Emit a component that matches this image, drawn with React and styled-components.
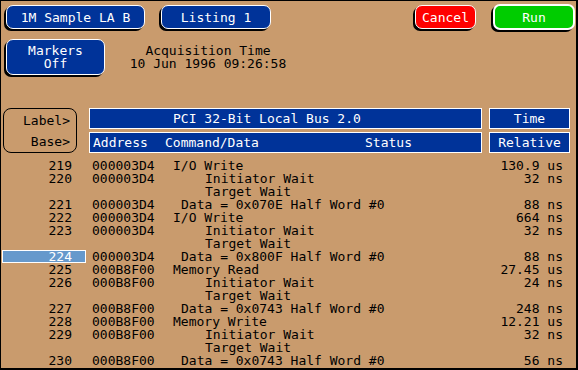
import React from 'react';
import styled, { createGlobalStyle } from 'styled-components';

const Global = createGlobalStyle`
  html, body {
    margin: 0;
    padding: 0;
    background: #c99b6d;
  }
`;

const Screen = styled.div`
  width: 578px;
  height: 370px;
  box-sizing: border-box;
  border-style: solid;
  border-color: #000;
  border-width: 1px 2px 2px 1px;
  background: #c99b6d;
  display: flex;
  flex-direction: column;
  overflow: hidden;
  font-family: 'DejaVu Sans Mono', 'Liberation Mono', monospace;
  font-size: 13px;
  color: #000;
`;

const TopBar = styled.div`
  display: flex;
  align-items: center;
  height: 26px;
  margin-top: 3px;
  padding: 0 1px 0 5px;
`;

const SoftKey = styled.div`
  width: ${({ $w }) => $w}px;
  height: ${({ $h }) => $h || 24}px;
  margin-left: ${({ $ml }) => ($ml === 'auto' ? 'auto' : `${$ml || 0}px`)};
  box-sizing: border-box;
  background: ${({ $bg }) => $bg || '#003399'};
  color: #fff;
  border: ${({ $bw }) => $bw || 1.5}px solid #fff;
  border-radius: 7px;
  box-shadow: -2px 2px 0 #000;
  display: flex;
  flex-direction: column;
  align-items: center;
  justify-content: center;
  line-height: 13px;
  white-space: pre;
`;

const InfoRow = styled.div`
  display: flex;
  margin-top: 9px;
  padding-left: 5px;
`;

const Acquisition = styled.div`
  width: 170px;
  margin-left: 18px;
  padding-top: 5px;
  text-align: center;
  line-height: 13px;
  white-space: pre;
`;

const Header = styled.div`
  display: flex;
  margin-top: 33px;
  padding-left: 2px;
`;

const LabelBox = styled.div`
  width: 74px;
  height: 45px;
  box-sizing: border-box;
  border: 1px solid #000;
  border-radius: 8px;
  display: flex;
  flex-direction: column;
  align-items: flex-end;
  padding: 5px 6px 0 0;
  line-height: 13px;
  gap: 8px;
`;

const Bars = styled.div`
  display: grid;
  grid-template-columns: 393px 81px;
  grid-template-rows: 21px 21px;
  column-gap: 7px;
  row-gap: 3px;
  margin-left: 12px;
`;

const Bar = styled.div`
  box-sizing: border-box;
  background: #003399;
  border: 1px solid #fff;
  color: #fff;
  display: flex;
  align-items: center;
  justify-content: ${({ $center }) => ($center ? 'center' : 'flex-start')};
  padding-left: ${({ $pl }) => $pl || 0}px;
  white-space: pre;
`;

const ColHead = styled.span`
  width: ${({ $w }) => ($w ? `${$w}px` : 'auto')};
  flex: none;
`;

const List = styled.div`
  display: flex;
  flex-direction: column;
  margin-top: 6px;
  padding: 0 13px 0 1px;
`;

const Row = styled.div`
  display: grid;
  grid-template-columns: 90px 81px 1fr 100px;
  height: 13px;
  line-height: 13px;
  white-space: pre;
`;

const State = styled.div`
  width: 84px;
  box-sizing: border-box;
  text-align: right;
  padding-right: 14px;
  background: ${({ $sel }) => ($sel ? '#6699cc' : 'transparent')};
  box-shadow: ${({ $sel }) => ($sel ? 'inset 0 0 0 1px #fff' : 'none')};
  color: ${({ $sel }) => ($sel ? '#fff' : '#000')};
`;

const Command = styled.div`
  padding-left: ${({ $indent }) => $indent || 0}px;
`;

const Time = styled.div`
  text-align: right;
`;

const rows = [
  { n: '219', a: '000003D4', c: 'I/O Write', t: '130.9 us' },
  { n: '220', a: '000003D4', c: 'Initiator Wait', i: 32, t: '32 ns' },
  { c: 'Target Wait', i: 32 },
  { n: '221', a: '000003D4', c: 'Data = 0x070E Half Word #0', i: 8, t: '88 ns' },
  { n: '222', a: '000003D4', c: 'I/O Write', t: '664 ns' },
  { n: '223', a: '000003D4', c: 'Initiator Wait', i: 32, t: '32 ns' },
  { c: 'Target Wait', i: 32 },
  { n: '224', a: '000003D4', c: 'Data = 0x800F Half Word #0', i: 8, t: '88 ns', sel: true },
  { n: '225', a: '000B8F00', c: 'Memory Read', t: '27.45 us' },
  { n: '226', a: '000B8F00', c: 'Initiator Wait', i: 32, t: '24 ns' },
  { c: 'Target Wait', i: 32 },
  { n: '227', a: '000B8F00', c: 'Data = 0x0743 Half Word #0', i: 8, t: '248 ns' },
  { n: '228', a: '000B8F00', c: 'Memory Write', t: '12.21 us' },
  { n: '229', a: '000B8F00', c: 'Initiator Wait', i: 32, t: '32 ns' },
  { c: 'Target Wait', i: 32 },
  { n: '230', a: '000B8F00', c: 'Data = 0x0743 Half Word #0', i: 8, t: '56 ns' },
];

export default function App() {
  return (
    <>
      <Global />
      <Screen>
        <TopBar>
          <SoftKey $w={139}>1M Sample LA B</SoftKey>
          <SoftKey $w={110} $ml={16}>Listing 1</SoftKey>
          <SoftKey $w={61} $ml="auto" $bg="#ff0000">Cancel</SoftKey>
          <SoftKey $w={82} $h={26} $ml={17} $bg="#00cc00" $bw={2}>Run</SoftKey>
        </TopBar>
        <InfoRow>
          <SoftKey $w={99} $h={36}>
            <span>Markers</span>
            <span>Off</span>
          </SoftKey>
          <Acquisition>
            <div>Acquisition Time</div>
            <div>10 Jun 1996 09:26:58</div>
          </Acquisition>
        </InfoRow>
        <Header>
          <LabelBox>
            <span>Label&gt;</span>
            <span>Base&gt;</span>
          </LabelBox>
          <Bars>
            <Bar $pl={83}>PCI 32-Bit Local Bus 2.0</Bar>
            <Bar $center>Time</Bar>
            <Bar $pl={3}>
              <ColHead $w={72}>Address</ColHead>
              <ColHead $w={200}>Command/Data</ColHead>
              <ColHead>Status</ColHead>
            </Bar>
            <Bar $center>Relative</Bar>
          </Bars>
        </Header>
        <List>
          {rows.map((r, k) => (
            <Row key={k}>
              <State $sel={r.sel}>{r.n || ''}</State>
              <div>{r.a || ''}</div>
              <Command $indent={r.i}>{r.c}</Command>
              <Time>{r.t || ''}</Time>
            </Row>
          ))}
        </List>
      </Screen>
    </>
  );
}
